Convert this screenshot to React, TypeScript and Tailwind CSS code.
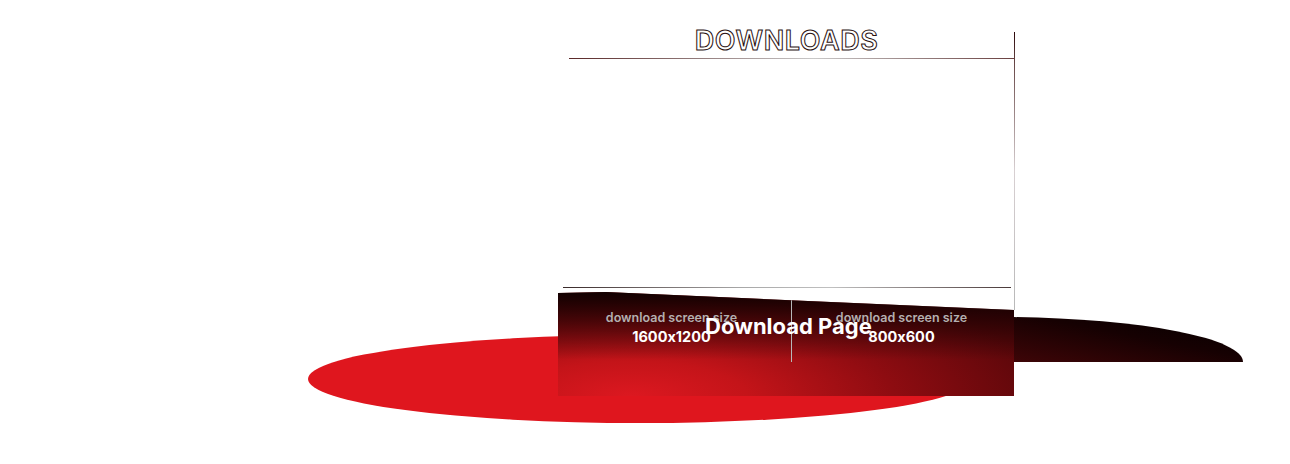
import React from "react";

const font = { fontFamily: "Inter, 'Noto Sans', sans-serif", fontFeatureSettings: "'calt' 0" };

function Blobs() {
  return (
    <svg className="absolute left-0 top-0" width="1290" height="464" viewBox="0 0 1290 464">
      <defs>
        <linearGradient id="darkBlob" x1="0" y1="1" x2="1" y2="0">
          <stop offset="0" stopColor="#3e0507" />
          <stop offset="0.55" stopColor="#160102" />
          <stop offset="1" stopColor="#030000" />
        </linearGradient>
      </defs>
      <ellipse cx="640" cy="379" rx="332" ry="44" fill="#df161e" />
      <path d="M1014 362 L1014 317.1 A243 45 0 0 1 1243 362 Z" fill="url(#darkBlob)" />
    </svg>
  );
}

export default function App() {
  return (
    <div className="relative w-[1290px] h-[464px] bg-white overflow-hidden" style={font}>
      <Blobs />

      <div className="relative ml-[558px] w-[457px] pt-[32px] flex flex-col">
        {/* header panel */}
        <div className="relative ml-[8px] h-[256px] flex flex-col">
          <div className="absolute right-0 top-0 w-px h-[278px] bg-[linear-gradient(to_bottom,#2a0608_0%,#6a4a4a_12%,#d8d0d2_50%,#b8b8b8_100%)]" />
          <div className="ml-[3px] mr-px h-[26px] flex items-start justify-center">
            <h2 className="-mt-[2px] -ml-[10px] text-[27px] leading-[22px] font-semibold tracking-[0.02em] text-white [-webkit-text-stroke:1px_#2a1010]">
              DOWNLOADS
            </h2>
          </div>
          <div className="ml-[3px] mr-px h-px bg-[linear-gradient(to_right,#5a2828_0%,#8a7070_25%,#c8c8c8_55%,#6a4040_100%)]" />
          <div className="flex-1" />
          <div className="-ml-[3px] mr-[4px] h-px bg-[linear-gradient(to_right,#3a2a2a_0%,#a8a8a8_40%,#c0c0c0_60%,#4a3a3a_100%)]" />
        </div>

        {/* dark download box */}
        <div className="relative mt-[4px] w-[456px] h-[104px] [clip-path:polygon(0_1px,10.5%_0,100%_18px,100%_100%,0_100%)] bg-[linear-gradient(to_bottom,rgba(14,0,0,0.96)_0%,rgba(14,0,0,0.45)_35%,rgba(14,0,0,0)_65%),radial-gradient(ellipse_115%_150%_at_16%_100%,#dc1820_0%,#c41419_22%,#8e0c11_50%,#5a070a_80%,#45050a_100%)]">
          <div className="relative flex h-full">
            <div className="w-[233px] pr-[6px] flex flex-col items-center pt-[19px]">
              <span className="text-[12.5px] leading-[14px] font-semibold text-[#b4b0b0]">download screen size</span>
              <span className="mt-[3px] text-[14.5px] leading-[18px] font-bold text-white">1600x1200</span>
            </div>
            <div className="w-px h-[70px] bg-[#b8b8b8]" />
            <div className="flex-1 pr-[3px] flex flex-col items-center pt-[19px]">
              <span className="text-[12.5px] leading-[14px] font-semibold text-[#b4b0b0]">download screen size</span>
              <span className="mt-[3px] text-[14.5px] leading-[18px] font-bold text-white">800x600</span>
            </div>
          </div>
          <div className="absolute left-0 right-0 top-[21px] flex justify-center">
            <span className="ml-[5px] text-[22px] leading-[26px] font-bold text-white">Download Page</span>
          </div>
        </div>
      </div>
    </div>
  );
}
